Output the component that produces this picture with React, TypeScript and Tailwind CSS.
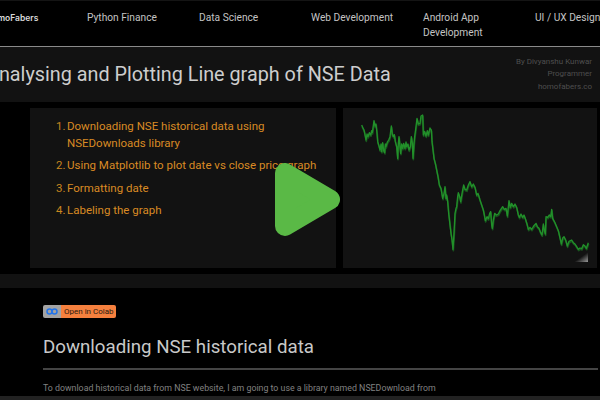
const NAV_ITEMS = ["Python Finance", "Data Science", "Web Development", "Android App Development", "UI / UX Design"];

const TOPICS = [
  "Downloading NSE historical data using NSEDownloads library",
  "Using Matplotlib to plot date vs close price graph",
  "Formatting date",
  "Labeling the graph",
];

// price line, in 3x coordinates of the chart area
const PRICE_POINTS =
  "65,75 69,84 72,90 75,104 78,120 81,102 84,110 88,98 92,105 95,92 97,98 102,62 105,78 108,72 111,100 113,125 117,138 120,150 123,132 125,155 128,128 131,152 134,158 136,132 138,140 142,126 146,120 150,110 154,78 157,102 160,110 163,104 166,125 170,140 173,175 175,130 177,110 180,140 182,160 185,132 188,145 191,130 195,145 198,126 200,140 204,132 207,150 211,140 214,110 217,130 219,175 222,130 224,110 228,80 231,55 235,72 240,70 243,48 248,45 250,105 254,94 258,108 262,92 265,105 270,84 274,90 276,125 279,150 282,175 286,190 290,210 294,230 298,255 303,265 308,295 312,280 315,260 318,296 320,285 323,305 326,340 330,375 333,400 336,420 339,448 342,400 345,340 348,325 350,320 353,290 355,278 359,290 362,305 367,275 371,255 375,268 380,270 385,255 390,245 395,260 400,252 405,262 410,285 414,280 420,300 425,315 430,330 433,345 436,362 441,350 445,356 449,340 452,335 455,375 457,385 460,360 464,340 469,345 475,342 480,332 488,320 493,328 498,325 502,348 507,302 511,322 515,310 520,320 525,312 530,322 535,345 538,352 543,342 548,352 552,345 556,356 561,372 565,388 570,382 575,388 581,378 588,370 592,380 597,385 602,398 606,405 610,372 613,392 616,402 618,350 623,352 628,345 632,350 635,328 638,355 644,366 650,380 655,392 658,405 661,418 664,432 668,414 672,410 677,420 682,438 687,424 695,420 700,428 705,432 710,440 715,448 720,444 725,446 730,434 735,438 739,445 745,428";

export default function App() {
  return (
    <div className="w-[600px] h-[400px] overflow-hidden bg-black font-['Roboto','Noto_Sans',sans-serif]">
      {/* nav */}
      <nav className="flex h-[47px] border-t border-t-[#141414] border-b border-b-[#8a8a8a]">
        <div className="w-[87px] shrink-0 overflow-hidden pt-[11px]">
          <span className="ml-[-13px] block font-['Inter',sans-serif] text-[8.5px] font-semibold leading-[12px] whitespace-nowrap text-[#d8d8d8]">
            homoFabers
          </span>
        </div>
        {NAV_ITEMS.map((item) => (
          <a key={item} className="w-[112px] shrink-0 pt-[9px] pr-[20px] text-[10.2px] leading-[15px] whitespace-nowrap text-[#c4c4c4]">
            {item === "Android App Development" ? (
              <>
                Android App
                <br />
                Development
              </>
            ) : (
              item
            )}
          </a>
        ))}
      </nav>

      {/* title */}
      <header className="flex h-[55px] items-center justify-between bg-[#121212] pr-[8px]">
        <h1 className="ml-[-14px] text-[19.8px] whitespace-nowrap text-[#cdcdcd]">Analysing and Plotting Line graph of NSE Data</h1>
        <div className="text-right text-[8px] leading-[12.2px] text-[#4e4e4e]">
          <p>By Divyanshu Kunwar</p>
          <p>Programmer</p>
          <p>homofabers.co</p>
        </div>
      </header>

      {/* video preview */}
      <section className="relative flex h-[172px] gap-[7px] py-[6px] pr-[3px] pl-[30px]">
        <div className="w-[306px] shrink-0 bg-[#121212] pt-[10px] pr-[4px] pl-[26px]">
          <ol className="flex flex-col gap-[5px] text-[11.5px] leading-[17.2px] text-[#d98a24]">
            {TOPICS.map((topic, i) => (
              <li key={topic} className="flex">
                <span className="w-[11px] shrink-0 text-[#c9861f]">{i + 1}.</span>
                <span>{topic}</span>
              </li>
            ))}
          </ol>
        </div>
        <div className="relative flex-1 bg-[#121212]">
          <svg viewBox="9 24 762 480" className="block h-full w-full" aria-hidden>
            <polyline points={PRICE_POINTS} fill="none" stroke="#1c7f24" strokeWidth="5" strokeLinejoin="round" transform="translate(1 4)" opacity="0.6" />
            <polyline points={PRICE_POINTS} fill="none" stroke="#22902a" strokeWidth="4" strokeLinejoin="round" />
          </svg>
          {/* corner fade */}
          <div className="absolute right-[9px] bottom-[6px] h-[10px] w-[14px] bg-linear-to-br from-transparent from-50% to-[#9a9a9a]" />
        </div>
        {/* play button */}
        <svg viewBox="0 0 65 73" className="absolute top-[61px] left-[275px] h-[73px] w-[65px]" aria-hidden>
          <path d="M10 10 L10 63 L55 36.5 Z" fill="#5ab946" stroke="#5ab946" strokeWidth="20" strokeLinejoin="round" />
        </svg>
      </section>

      <div className="h-[14px] bg-[#121212]" />

      {/* article */}
      <article className="h-[108px] pt-[17px] pr-[2px] pl-[43px]">
        <a className="flex h-[13px] w-[73px] overflow-hidden rounded-[2px] text-[8px] leading-[13px]">
          <span className="flex w-[18px] items-center justify-center bg-[#a3a3a3]">
            <svg viewBox="0 0 24 14" className="h-[7px] w-[12px]" aria-hidden>
              <circle cx="7" cy="7" r="5" fill="none" stroke="#2274ea" strokeWidth="3" />
              <circle cx="17" cy="7" r="5" fill="none" stroke="#2274ea" strokeWidth="3" />
            </svg>
          </span>
          <span className="flex-1 bg-[#f5803e] pl-[3px] whitespace-nowrap text-[#2a1a10]">Open in Colab</span>
        </a>
        <h2 className="mt-[15px] border-b-2 border-b-[#444] pb-[7px] text-[18.7px] leading-[28px] text-[#c9c9c9]">Downloading NSE historical data</h2>
        <p className="mt-[11px] text-[8.8px] leading-[14px] whitespace-nowrap text-[#808080]">
          To download historical data from NSE website, I am going to use a library named NSEDownload from
        </p>
      </article>

      <div className="h-[4px] bg-[#222]" />
    </div>
  );
}
